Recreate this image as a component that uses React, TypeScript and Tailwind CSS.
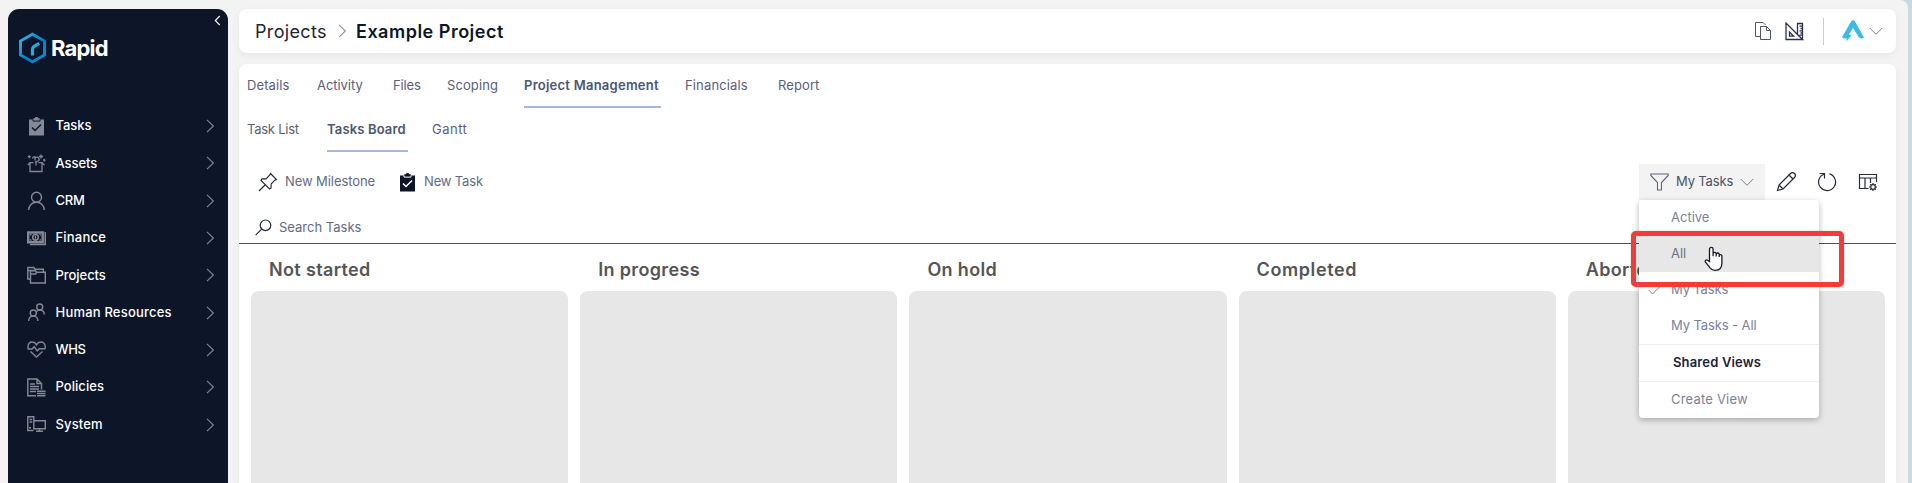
import React from "react";

type IconProps = { className?: string };

const stroke = { fill: "none", stroke: "currentColor" } as const;

function Chevron({ className = "" }: IconProps) {
  return (
    <svg className={className} width="9" height="14" viewBox="0 0 9 14" {...stroke} strokeWidth="1.1">
      <path d="M1 .8 7.4 7 1 13.2" />
    </svg>
  );
}

function ChevronDown({ className = "" }: IconProps) {
  return (
    <svg className={className} width="14" height="9" viewBox="0 0 14 9" {...stroke} strokeWidth="1">
      <path d="M.8 1 7 7.3 13.2 1" />
    </svg>
  );
}

function ClipboardIcon({ className = "", tick }: IconProps & { tick: string }) {
  return (
    <svg className={className} width="19" height="19" viewBox="0 0 19 19">
      <path fill="currentColor" d="M2 2.5h4.2V1.2h1.6C8 .3 8.600 0 9.500 0s1.500.3 1.700 1.200h1.600v1.300H17V18.500H2z" />
      <path stroke={tick} strokeWidth="1" fill="none" d="M6 2.500v1.600h7V2.500" />
      <path stroke={tick} strokeWidth="1.500" fill="none" d="m5 10.500 3 3 6-6" />
    </svg>
  );
}

const navIcons: Record<string, React.ReactNode> = {
  Tasks: <ClipboardIcon tick="#0d1528" />,
  Assets: (
    <svg width="19" height="19" viewBox="0 0 19 19" {...stroke} strokeWidth="1.300">
      <path d="M3 8.500v9h12v-9M.8 11 3 8.700h3.500M17.500 11 15 8.700h-3.500M9 11.500V8M5.500 4.500a2 2 0 0 1 3.500-1 2 2 0 0 1 2 3.500L8 8.200M8 3.500v3M2.200 1.200v3M.8 2.700h3M14 .5v4M12 2.500h4M17.200 5v2.500M16 6.200h2.500" />
    </svg>
  ),
  CRM: (
    <svg width="19" height="19" viewBox="0 0 19 19" {...stroke} strokeWidth="1.400">
      <circle cx="9.500" cy="6.200" r="5" />
      <path d="M1.700 19c0-4.500 3.400-7.700 7.800-7.700s7.800 3.200 7.800 7.700" />
    </svg>
  ),
  Finance: (
    <svg width="19" height="19" viewBox="0 0 19 19" {...stroke} strokeWidth="1.300">
      <path strokeWidth="2.400" d="M1.200 3.500h14.500v9.700H1.200z" />
      <path d="M18.300 3v12.500H3" strokeWidth="1.600" />
      <circle cx="8.500" cy="8.300" r="2.800" strokeWidth="1.600" />
      <path d="M8.500 6.800v3M3 6.200l1.500-1M3 10.500l1.500 1M14 6.200l-1.500-1M14 10.500l-1.500 1" />
    </svg>
  ),
  Projects: (
    <svg width="19" height="19" viewBox="0 0 19 19" {...stroke} strokeWidth="1.400">
      <path d="M3.500 13H.8V1.500H7l1 1.700h8.300V6" />
      <path d="M3.500 17V4.700h5L9.700 6.200h8.600V17z" />
      <path d="M1 4.500h6M3.500 8h5.200l1-1.800" />
    </svg>
  ),
  "Human Resources": (
    <svg width="19" height="19" viewBox="0 0 19 19" {...stroke} strokeWidth="1.400">
      <circle cx="6.300" cy="10" r="3" />
      <circle cx="12.700" cy="4" r="3" />
      <path d="M1.700 18c0-2.800 1.800-4.900 4.600-4.900s4.600 2.100 4.600 4.900M9.300 8.400c.9-.9 2-1.300 3.400-1.300 2.700 0 4.600 1.700 4.600 4.400" />
    </svg>
  ),
  WHS: (
    <svg width="19" height="19" viewBox="0 0 19 19" {...stroke} strokeWidth="1.400">
      <path d="M1 8.500V6.500C1 3.700 2.800 2 5 2c2 0 3.500 1 4.500 2.800C10.500 3 12 2 14 2c2.200 0 4.200 1.700 4.200 4.500v2M3.500 11.500l6 5.500 6-5.500M.5 9h4.700l2-2.300 3 4.300 2-2.200H18.500" />
    </svg>
  ),
  Policies: (
    <svg width="19" height="19" viewBox="0 0 19 19" {...stroke} strokeWidth="1.400">
      <path d="M9 17.700H.8V1H10l4.500 4.500v6M10 1v4.500h4.500M3 6h5M3 8.500h9M3 11h9M3 13.500h6M10 13.200h8.500M10 15.500h8.500M10 17.700h8.500" />
    </svg>
  ),
  System: (
    <svg width="19" height="19" viewBox="0 0 19 19" {...stroke} strokeWidth="1.400">
      <path d="M6.500 15.500H.8V1.700h6v4M2.500 4.500h2.700M2.500 7h2.700M6.800 5.700h11.500v8H6.800zM12.500 13.700v2.500M9 16.300h7M2 12.700h2" />
    </svg>
  ),
};

const navItems = [
  { label: "Tasks", tracking: "tracking-[-0.05px]" },
  { label: "Assets", tracking: "tracking-[-0.05px]" },
  { label: "CRM", tracking: "tracking-[-0.2px]" },
  { label: "Finance", tracking: "tracking-[0.2px]" },
  { label: "Projects", tracking: "tracking-[-0.05px]" },
  { label: "Human Resources", tracking: "tracking-[0.2px]" },
  { label: "WHS", tracking: "tracking-[-0.4px]" },
  { label: "Policies", tracking: "tracking-[0.05px]" },
  { label: "System", tracking: "tracking-[0.15px]" },
];

function Sidebar() {
  return (
    <aside className="relative ml-2 mt-[9px] h-[474px] w-[220px] shrink-0 rounded-t-[11px] bg-[#0d1528]">
      <svg className="absolute right-[7px] top-[6px] text-white" width="7" height="11" viewBox="0 0 7 11" {...stroke} strokeWidth="1.100">
        <path d="M5.700 1 1.300 5.500l4.400 4.500" />
      </svg>
      <div className="flex h-[98.500px] items-start pl-[10px] pt-[23px]">
        <svg width="29" height="32" viewBox="0 0 29 32" fill="none">
          <defs>
            <linearGradient id="hex" x1="0" y1="0" x2="1" y2="1">
              <stop offset="0" stopColor="#35b6e6" />
              <stop offset="0.600" stopColor="#0878c4" />
              <stop offset="1" stopColor="#1590d4" />
            </linearGradient>
          </defs>
          <path d="M14.500 2.200 26.500 9v14l-12 6.800L2.500 23V9z" stroke="url(#hex)" strokeWidth="3" />
          <path d="M14.500 23.500v-6.300c0-1.500.6-2.200 1.700-2.900l5-3" stroke="#2ba9df" strokeWidth="3.200" />
        </svg>
        <span className="ml-[4px] mt-px text-[22px] font-bold leading-[30px] tracking-[-0.8px] text-white">Rapid</span>
      </div>
      <nav className="flex flex-col">
        {navItems.map(({ label, tracking }) => (
          <a key={label} className="flex h-[37.300px] items-center pl-[19px] pr-[13px] text-[#848995]">
            {navIcons[label]}
            <span className={`ml-[9.500px] flex-1 whitespace-nowrap text-[13px] font-medium text-white ${tracking}`}>{label}</span>
            <Chevron />
          </a>
        ))}
      </nav>
    </aside>
  );
}

function Header() {
  return (
    <header className="flex h-[44px] items-center rounded-lg bg-white pl-4 pr-[13px] shadow-[0_3px_8px_rgba(0,0,0,0.050)]">
      <span className="w-[83px] text-[18px] tracking-[0.350px] text-[#1d2433]">Projects</span>
      <Chevron className="text-[#8d929d]" />
      <h1 className="ml-[9px] text-[18px] font-semibold tracking-[0.500px] text-[#0d1528]">Example Project</h1>
      <div className="ml-auto flex items-center text-[#28324a]">
        <svg width="18" height="20" viewBox="0 0 18 20" {...stroke} strokeWidth="1" stroke="#4c566c">
          <path d="M6.500 15.500h-5v-14H9l2.500 2.500M6.500 5.500h6l4 4v9h-10zM12.500 5.500v4h4" />
        </svg>
        <svg className="ml-[13px]" width="19" height="19" viewBox="0 0 19 19" {...stroke} strokeWidth="1.300">
          <path d="M1 1v16.500h16.500zM4.500 10v4.200h4.200zM12.500 12V1.500h5v16M14.500 4.200h3M15.500 6.500h2M14.500 8.800h3M15.500 11h2M14.500 13.200h3" />
        </svg>
        <span className="ml-[19px] h-[27px] w-px bg-[#cbcbcb]" />
        <svg className="ml-[18px]" width="22" height="22" viewBox="0 0 22 22" fill="#3cbbe8">
          <path d="M9.300.9Q11-.4 12.700.9L22 17.500q-2.500 2-5 0L11 8 6.800 14.800l2.700.4L4.300 21.500l.6-3.300Q2 19 0 17.200z" />
        </svg>
        <ChevronDown className="ml-[5px] text-[#7d8290]" />
      </div>
    </header>
  );
}

type Tab = { label: string; box: string; active?: boolean };

const tabs: Tab[] = [
  { label: "Details", box: "w-[70px] tracking-[0.100px]" },
  { label: "Activity", box: "w-[76px] tracking-[-0.050px]" },
  { label: "Files", box: "w-[54px] tracking-[-0.150px]" },
  { label: "Scoping", box: "w-[77px] tracking-[0.100px]" },
  { label: "Project Management", box: "w-[137px] mr-6 tracking-[0.250px]", active: true },
  { label: "Financials", box: "w-[93px] tracking-[0.150px]" },
  { label: "Report", box: "w-[60px] tracking-[0.100px]" },
];

const subTabs: Tab[] = [
  { label: "Task List", box: "w-[80px] tracking-[-0.250px]" },
  { label: "Tasks Board", box: "w-[81px] mr-6 tracking-[0.150px]", active: true },
  { label: "Gantt", box: "w-[60px] tracking-[0.500px]" },
];

function TabRow({ items }: { items: Tab[] }) {
  return (
    <div className="flex h-[44px] pl-2 text-[13px] text-[#5a6178]">
      {items.map(({ label, box, active }) => (
        <div
          key={label}
          className={`flex h-[44px] items-center whitespace-nowrap border-b-2 pt-[2px] ${box} ${
            active ? "border-[#a5b6e0] font-semibold text-[#4c5672]" : "border-transparent"
          }`}
        >
          {label}
        </div>
      ))}
    </div>
  );
}

function ViewMenu() {
  const item = "flex h-9 items-center pl-8 text-[13px] text-[#7a8299]";
  return (
    <div className="absolute left-0 top-9 z-10 w-[180px] rounded-[4px] bg-white shadow-[0_2px_6px_rgba(0,0,0,0.280)]">
      <div className={item}>Active</div>
      <div className="flex h-9 items-center bg-[#e7e7e7] pl-8 text-[13px] text-[#6b7280]">All</div>
      <div className="flex h-9 items-center text-[13px] tracking-[-0.150px] text-[#7a8299]">
        <svg className="ml-[9px] mr-[10px]" width="13" height="10" viewBox="0 0 13 10" {...stroke} strokeWidth="1">
          <path d="m.8 5 3.700 4L12.500 1" />
        </svg>
        My Tasks
      </div>
      <div className="flex h-9 items-center pl-8 text-[13px] tracking-[-0.100px] text-[#7a8299]">My Tasks - All</div>
      <div className="flex h-[37px] items-center border-t border-[#eeeeee] pl-[34px] text-[13px] font-semibold tracking-[0.150px] text-[#1a2236]">
        Shared Views
      </div>
      <div className="flex h-[37px] items-center border-t border-[#eeeeee] pl-8 text-[13px] tracking-[0.200px] text-[#7a8299]">Create View</div>
      <div className="absolute left-[-8px] top-[31px] h-[56px] w-[213px] rounded-[5px] border-[5px] border-[#f43b3b] shadow-[0_0_1px_rgba(0,0,0,0.600)]" />
      <svg className="absolute left-[65px] top-[46px]" width="19" height="26" viewBox="0 0 19 26" fill="white" stroke="#15182b" strokeWidth="1.300">
        <path d="M5.500 15.500V3.200a1.800 1.800 0 0 1 3.600 0v7V7.500a1.600 1.600 0 0 1 3.100 0v3-2a1.500 1.500 0 0 1 3 0v2.500-1.300a1.400 1.400 0 0 1 2.700 0V17c0 4.500-2.600 7.300-6.600 7.300-3.300 0-5.100-1.500-6.600-4.300L1.300 15.800c-.7-1.300 1.200-2.500 2.300-1.600z" />
      </svg>
    </div>
  );
}

function Toolbar() {
  return (
    <div className="flex h-[60px] items-center pl-[19px] text-[13px] text-[#626a80]">
      <svg className="text-[#1c2438]" width="20" height="20" viewBox="0 0 20 20" {...stroke} strokeWidth="1.100">
        <path d="m12.500 1.500 6 6-1.700.7-3.700 3.800v4l-1.500 1-8.600-8.600 1-1.500h4L11.800 3zM7 13l-6 6" />
      </svg>
      <span className="ml-[7px] w-[113px] whitespace-nowrap tracking-[-0.080px]">New Milestone</span>
      <ClipboardIcon className="text-[#0d1528]" tick="#ffffff" />
      <span className="ml-[7px] tracking-[-0.150px]">New Task</span>
      <div className="relative ml-auto flex h-9 w-[126px] items-center bg-[#f3f3f3] pl-[11px] text-[#4b5263]">
        <svg className="text-[#5c6579]" width="19" height="18" viewBox="0 0 19 18" {...stroke} strokeWidth="1.100">
          <path d="M.8 1h17.400v1.500L11.500 9.500V17h-4V9.500L.8 2.500z" />
        </svg>
        <span className="ml-[7px] w-[64px] whitespace-nowrap tracking-[-0.150px]">My Tasks</span>
        <ChevronDown className="text-[#777d8b]" />
        <ViewMenu />
      </div>
      <div className="ml-[11px] mr-[18px] flex items-center text-[#252b3c]">
        <svg width="20" height="20" viewBox="0 0 20 20" {...stroke} strokeWidth="1.200">
          <path d="M1.500 18.500 3 13 14.500 1.500a2.500 2.500 0 0 1 4 4L7 17zM3 13l4 4M13 3l4 4" />
        </svg>
        <svg className="ml-[21px]" width="20" height="20" viewBox="0 0 20 20" {...stroke} strokeWidth="1.200">
          <path d="M12.500 1.900a8.500 8.500 0 1 1-5.700.3M2.500 1.500h5v5" />
        </svg>
        <svg className="ml-[21px]" width="20" height="20" viewBox="0 0 20 20" {...stroke} strokeWidth="1.200">
          <path d="M10.500 16.500h-9v-14h17V10M1.500 6h17M7 6v10.500M12.500 6v5" />
          <circle cx="15" cy="15" r="2.300" />
          <path d="M15 11v1.500M15 17.500V19M11 15h1.500M17.500 15H19M12.200 12.200l1 1M16.800 16.800l1 1M12.200 17.800l1-1M16.800 13.200l1-1" />
        </svg>
      </div>
    </div>
  );
}

const columns = [
  { name: "Not started", tracking: "tracking-[0.350px]" },
  { name: "In progress", tracking: "tracking-[0.350px]" },
  { name: "On hold", tracking: "tracking-[0.350px]" },
  { name: "Completed", tracking: "tracking-[0.600px]" },
  { name: "Aborted", tracking: "tracking-[0.300px]" },
];

function Board() {
  return (
    <div className="flex gap-3 pl-3">
      {columns.map(({ name, tracking }) => (
        <section key={name} className="w-[317.200px] shrink-0">
          <h2 className={`flex h-[47px] items-center pl-[18px] pt-[4px] text-[18px] font-semibold text-[#555555] ${tracking}`}>{name}</h2>
          <div className="h-[192px] rounded-t-lg bg-[#e7e7e7]" />
        </section>
      ))}
    </div>
  );
}

export default function App() {
  return (
    <div className="h-[483px] w-[1912px] overflow-hidden bg-[#c5dde1] font-['Inter','Noto_Sans',sans-serif]">
      <div className="flex h-full w-[1908px] overflow-hidden rounded-tr-lg bg-[#f3f3f3]">
        <Sidebar />
        <main className="ml-[11px] w-[1657px] pt-[9px]">
          <Header />
          <div className="mt-[11px] h-[419px] rounded-t-lg bg-white shadow-[0_3px_8px_rgba(0,0,0,0.050)]">
            <TabRow items={tabs} />
            <TabRow items={subTabs} />
            <Toolbar />
            <div className="flex h-[32px] items-center border-b border-[#4b4f6b] pl-4 text-[13px] text-[#626a80]">
              <svg className="text-[#252b3c]" width="17" height="17" viewBox="0 0 17 17" {...stroke} strokeWidth="1.200">
                <circle cx="10.500" cy="6.300" r="5.300" />
                <path d="M6.700 10.100.7 16.100" />
              </svg>
              <span className="ml-[7px]">Search Tasks</span>
            </div>
            <Board />
          </div>
        </main>
      </div>
    </div>
  );
}
